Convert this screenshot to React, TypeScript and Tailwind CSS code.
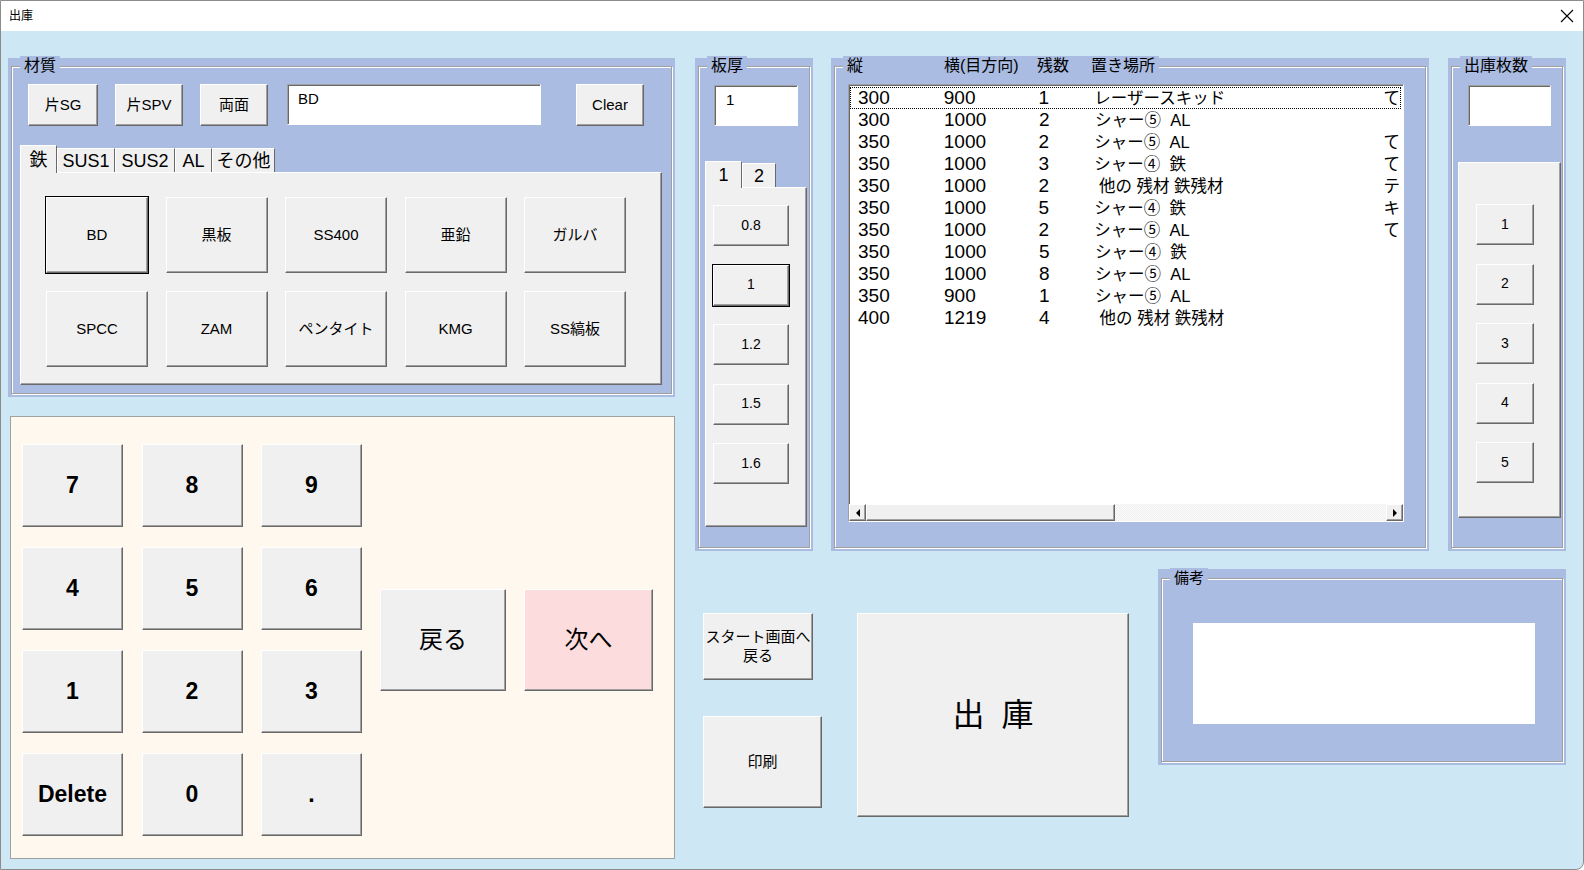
import { ReactNode } from 'react'

const face = 'bg-[#f0f0f0] border border-t-white border-l-white border-r-[#696969] border-b-[#696969] shadow-[inset_-1px_-1px_0_#a0a0a0]'
const sunken = 'bg-white border border-t-[#a0a0a0] border-l-[#a0a0a0] border-r-white border-b-white shadow-[inset_1px_1px_0_#696969]'
const jp = "font-['Liberation_Sans','Noto_Sans_CJK_JP',sans-serif]"

function Btn({ className = '', children, selected = false }: { className?: string; children: ReactNode; selected?: boolean }) {
  return (
    <div className={`${face} ${selected ? 'outline outline-black' : ''} flex items-center justify-center text-center leading-tight ${className}`}>
      {children}
    </div>
  )
}

function Frame({ caption, className = '', top = 'pt-[8px]', children }: { caption: ReactNode; className?: string; top?: string; children: ReactNode }) {
  return (
    <div className={`bg-[#aabce2] px-[3px] pb-[3px] flex flex-col shrink-0 ${top} ${className}`}>
      <div className="relative flex-1 border border-[#a0a0a0] shadow-[inset_1px_1px_0_#fff,1px_1px_0_#fff] flex flex-col">
        <div className="absolute left-[8px] top-[-11px] bg-[#aabce2] px-[4px] text-[16px] leading-[20px] whitespace-pre flex">{caption}</div>
        {children}
      </div>
    </div>
  )
}

const materials = ['BD', '黒板', 'SS400', '亜鉛', 'ガルバ', 'SPCC', 'ZAM', 'ペンタイト', 'KMG', 'SS縞板']
const tabs = [
  { t: '鉄', w: 'w-[37px]' },
  { t: 'SUS1', w: 'w-[58px]' },
  { t: 'SUS2', w: 'w-[60px]' },
  { t: 'AL', w: 'w-[37px]' },
  { t: 'その他', w: 'w-[63px]' },
]
const thick = ['0.8', '1', '1.2', '1.5', '1.6']
const keys = ['7', '8', '9', '4', '5', '6', '1', '2', '3', 'Delete', '0', '.']

const rows = [
  ['300', '900', '1', 'レーザースキッド', 'て'],
  ['300', '1000', '2', 'シャー⑤  AL', ''],
  ['350', '1000', '2', 'シャー⑤  AL', 'て'],
  ['350', '1000', '3', 'シャー④  鉄', 'て'],
  ['350', '1000', '2', ' 他の 残材 鉄残材', 'テ'],
  ['350', '1000', '5', 'シャー④  鉄', 'キ'],
  ['350', '1000', '2', 'シャー⑤  AL', 'て'],
  ['350', '1000', '5', 'シャー④  鉄', ''],
  ['350', '1000', '8', 'シャー⑤  AL', ''],
  ['350', '900', '1', 'シャー⑤  AL', ''],
  ['400', '1219', '4', ' 他の 残材 鉄残材', ''],
]

function Arrow({ dir }: { dir: 'l' | 'r' }) {
  return (
    <svg width="6" height="8" viewBox="0 0 6 8">
      {dir === 'l' ? <path d="M5 0 L1 4 L5 8 Z" fill="#000" /> : <path d="M1 0 L5 4 L1 8 Z" fill="#000" />}
    </svg>
  )
}

export default function App() {
  return (
    <div className={`w-[1584px] h-[870px] flex flex-col bg-[#cde8f4] border border-[#8c8c8c] rounded-br-[8px] overflow-hidden text-black ${jp}`}>
      {/* title bar */}
      <div className="h-[30px] bg-white flex items-center justify-between pl-[8px] pr-[8px] shrink-0">
        <span className="text-[12px]">出庫</span>
        <svg width="14" height="14" viewBox="0 0 14 14" className="mr-[1px]">
          <path d="M1 1 L13 13 M13 1 L1 13" stroke="#000" strokeWidth="1.1" />
        </svg>
      </div>

      <div className="flex-1 flex pl-[7px] pt-[27px] gap-[20px]">
        {/* left column */}
        <div className="flex flex-col w-[667px] shrink-0">
          <Frame caption="材質" className="h-[339px]">
            <div className="flex items-start mt-[17px] pl-[16px] text-[15px]">
              <Btn className="w-[70px] h-[42px]">片SG</Btn>
              <Btn className="w-[68px] h-[42px] ml-[17px]">片SPV</Btn>
              <Btn className="w-[68px] h-[42px] ml-[17px]">両面</Btn>
              <div className={`${sunken} w-[254px] h-[41px] ml-[19px] pl-[10px] pt-[3px] text-[15px]`}>BD</div>
              <Btn className="w-[68px] h-[42px] ml-[35px]">Clear</Btn>
            </div>
            <div className="flex items-end h-[28px] mt-[18px] ml-[8px] text-[18px] leading-none">
              {tabs.map((t, i) => (
                <div
                  key={t.t}
                  className={`${t.w} bg-[#f0f0f0] border border-b-0 border-t-white border-l-white border-r-[#696969] flex items-center justify-center ${i === 0 ? 'h-[28px] relative z-10 -mb-[1px]' : 'h-[24px]'}`}
                >
                  {t.t}
                </div>
              ))}
            </div>
            <div className={`${face} w-[642px] h-[213px] ml-[8px] pl-[25px] pt-[24px]`}>
              <div className="grid grid-cols-[repeat(5,102px)] gap-x-[17.5px] gap-y-[18px] text-[15px]">
                {materials.map((m, i) => (
                  <Btn key={m} selected={i === 0} className="h-[76px]">{m}</Btn>
                ))}
              </div>
            </div>
          </Frame>

          <div className="mt-[19px] ml-[2px] w-[665px] h-[443px] bg-[#fff8ee] border border-[#a0a0a0] flex items-start pl-[11px] pt-[27px]">
            <div className="grid grid-cols-[repeat(3,101px)] gap-x-[18.5px] gap-y-[20px] text-[23px]">
              {keys.map(k => (
                <Btn key={k} className="h-[83px] font-bold">{k}</Btn>
              ))}
            </div>
            <div className="flex gap-[18px] ml-[18px] mt-[145px] text-[24px]">
              <Btn className="w-[126px] h-[102px]">戻る</Btn>
              <Btn className="w-[129px] h-[102px] !bg-[#fddcdd]">次へ</Btn>
            </div>
          </div>
        </div>

        {/* right area */}
        <div className="flex flex-col">
          <div className="flex items-start">
            {/* 板厚 */}
            <Frame caption="板厚" className="w-[118px] h-[493px]">
              <div className={`${sunken} w-[84px] h-[41px] ml-[15px] mt-[18px] pl-[11px] pt-[3px] text-[15px]`}>1</div>
              <div className="flex items-end h-[27px] mt-[34px] ml-[6px] text-[18px] leading-none">
                <div className="w-[37px] h-[27px] bg-[#f0f0f0] border border-b-0 border-t-white border-l-white border-r-[#696969] flex items-center justify-center relative z-10 -mb-[1px]">1</div>
                <div className="w-[34px] h-[24px] bg-[#f0f0f0] border border-b-0 border-t-white border-l-white border-r-[#696969] flex items-center justify-center">2</div>
              </div>
              <div className={`${face} w-[102px] h-[340px] ml-[6px] pl-[7px] pt-[17px] flex flex-col gap-[18.5px] text-[14px]`}>
                {thick.map((t, i) => (
                  <Btn key={t} selected={i === 1} className="w-[76px] h-[41px]">{t}</Btn>
                ))}
              </div>
            </Frame>

            {/* list */}
            <Frame
              className="w-[598px] h-[493px] ml-[18px]"
              caption={
                <>
                  <span className="w-[97px]">縦</span>
                  <span className="w-[93px]">横(目方向)</span>
                  <span className="w-[54px]">残数</span>
                  <span>置き場所</span>
                </>
              }
            >
              <div className={`${sunken} w-[556px] h-[438px] ml-[13px] mt-[17px] flex flex-col overflow-hidden`}>
                <div className="flex-1 pt-[2px] pl-[1px]">
                  {rows.map((r, i) => (
                    <div
                      key={i}
                      className={`relative h-[22px] w-[551px] flex items-center whitespace-pre overflow-hidden ${i === 0 ? 'border border-dotted border-black' : 'border border-transparent'}`}
                    >
                      <span className="w-[93px] pl-[7px] text-[19px]">{r[0]}</span>
                      <span className="w-[95px] text-[19px]">{r[1]}</span>
                      <span className="w-[56px] text-[19px]">{r[2]}</span>
                      <span className="w-[290px] text-[16.5px]">{r[3]}</span>
                      <span className="text-[16.5px]">{r[4]}</span>
                    </div>
                  ))}
                </div>
                <div className="h-[17px] flex bg-[repeating-conic-gradient(#f0f0f0_0_25%,#fafafa_0_50%)] bg-[length:2px_2px]">
                  <div className={`${face} w-[17px] flex items-center justify-center`}><Arrow dir="l" /></div>
                  <div className={`${face} w-[249px]`} />
                  <div className="flex-1" />
                  <div className={`${face} w-[17px] flex items-center justify-center`}><Arrow dir="r" /></div>
                </div>
              </div>
            </Frame>

            {/* 出庫枚数 */}
            <Frame caption="出庫枚数" className="w-[118px] h-[493px] ml-[19px]">
              <div className={`${sunken} w-[83px] h-[41px] ml-[16px] mt-[18px]`} />
              <div className={`${face} w-[103px] h-[356px] ml-[6px] mt-[36px] pl-[17px] pt-[41px] flex flex-col gap-[18.5px] text-[14px]`}>
                {['1', '2', '3', '4', '5'].map(n => (
                  <Btn key={n} className="w-[58px] h-[41px]">{n}</Btn>
                ))}
              </div>
            </Frame>
          </div>

          {/* bottom */}
          <div className="flex items-start">
            <div className="flex flex-col ml-[8px] mt-[62px] w-[119px] text-[15px]">
              <Btn className="w-[110px] h-[67px] leading-[17px]">スタート画面へ<br />戻る</Btn>
              <Btn className="w-[119px] h-[92px] mt-[36px]">印刷</Btn>
            </div>
            <Btn className="w-[272px] h-[204px] ml-[35px] mt-[62px] text-[32px] gap-[17px]">
              <span>出</span>
              <span>庫</span>
            </Btn>
            <Frame caption={<span className="text-[15px]">備考</span>} top="pt-[9px]" className="w-[408px] h-[196px] ml-[29px] mt-[18px]">
              <div className="w-[342px] h-[101px] bg-white ml-[31px] mt-[44px]" />
            </Frame>
          </div>
        </div>
      </div>
    </div>
  )
}
